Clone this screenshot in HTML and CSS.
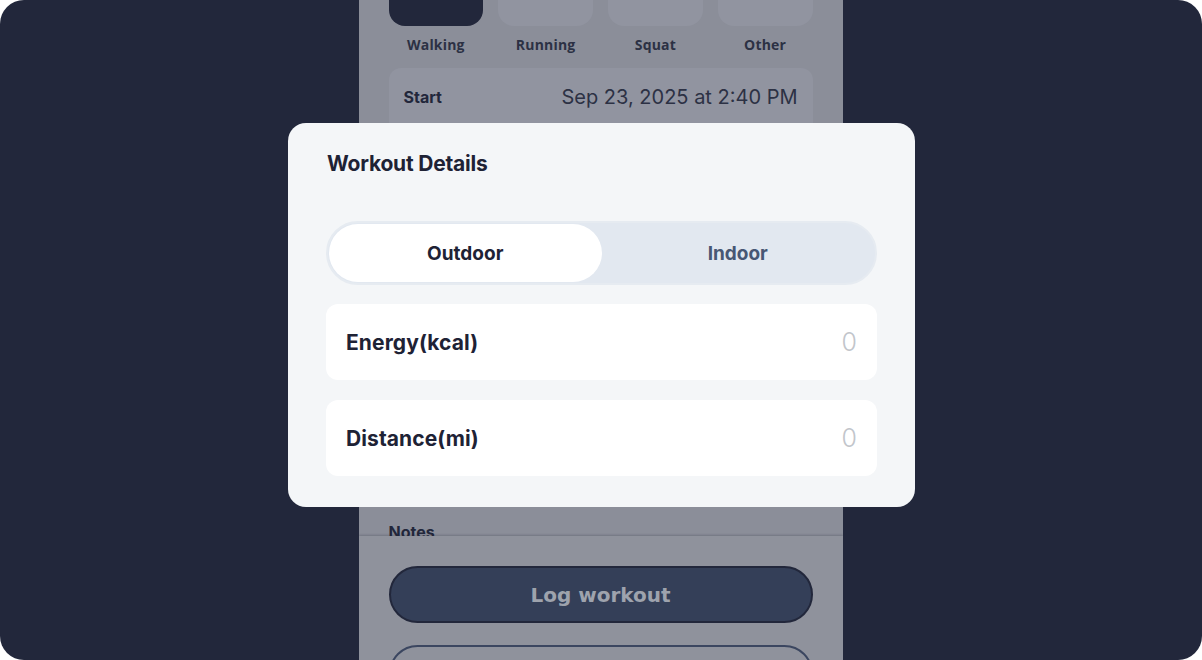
FILE: index.html
```html
<!DOCTYPE html>
<html lang="en">
<head>
    <meta charset="UTF-8">
    <meta name="viewport" content="width=device-width, initial-scale=1.0">
    <title>Log Workout</title>
    <link rel="stylesheet" href="styles.css">
</head>
<body>

<div class="frame">

    <div class="phone">
        <div class="phone-scroll">
            <div class="type-grid">
                <div class="type-item">
                    <div class="type-tile selected"></div>
                    <span>Walking</span>
                </div>
                <div class="type-item">
                    <div class="type-tile"></div>
                    <span>Running</span>
                </div>
                <div class="type-item">
                    <div class="type-tile"></div>
                    <span>Squat</span>
                </div>
                <div class="type-item">
                    <div class="type-tile"></div>
                    <span>Other</span>
                </div>
            </div>

            <div class="time-card">
                <div class="time-row">
                    <strong>Start</strong>
                    <span>Sep 23, 2025 at 2:40 PM</span>
                </div>
            </div>

            <div class="spacer"></div>

            <div class="notes-label">Notes</div>
        </div>

        <div class="phone-footer">
            <button class="btn btn-primary">Log workout</button>
            <button class="btn btn-outline"></button>
        </div>
    </div>

    <div class="modal">
        <h2>Workout Details</h2>

        <div class="segmented">
            <button class="segment active">Outdoor</button>
            <button class="segment">Indoor</button>
        </div>

        <div class="field">
            <label>Energy(kcal)</label>
            <span class="field-value">0</span>
        </div>

        <div class="field">
            <label>Distance(mi)</label>
            <span class="field-value">0</span>
        </div>
    </div>

</div>

</body>
</html>
```

FILE: styles.css
```css
* {
    box-sizing: border-box;
}

body {
    margin: 0;
    padding: 0;
    background-color: #ffffff;
    font-family: Inter, "Liberation Sans", sans-serif;
}

.frame {
    position: relative;
    width: 1202px;
    height: 660px;
    background-color: #22273b;
    border-radius: 24px;
    overflow: hidden;
    display: flex;
    justify-content: center;
}

.phone {
    width: 484px;
    margin-left: -1px;
    height: 660px;
    background-color: #8b8e99;
    display: flex;
    flex-direction: column;
    overflow: hidden;
}

.phone-scroll {
    flex: 1;
    min-height: 0;
    overflow: hidden;
    padding: 0 30px;
}

.type-grid {
    margin-top: -54px;
    display: grid;
    grid-template-columns: repeat(4, 1fr);
    gap: 15px;
}

.type-item {
    display: flex;
    flex-direction: column;
    align-items: center;
}

.type-tile {
    width: 100%;
    height: 80px;
    border-radius: 16px;
    background-color: #9194a0;
}

.type-tile.selected {
    background-color: #22273b;
}

.type-item span {
    margin-top: 9px;
    font-family: "Open Sans", sans-serif;
    font-size: 14px;
    font-weight: 700;
    letter-spacing: 0.2px;
    color: #2c3144;
}

.time-card {
    margin-top: 14px;
    height: 116px;
    background-color: #9194a0;
    border-radius: 12px;
    padding: 0 15px;
}

.time-row {
    display: flex;
    justify-content: space-between;
    align-items: center;
    height: 58px;
}

.time-row strong {
    font-size: 16px;
    font-weight: 700;
    color: #22273b;
}

.time-row span {
    font-size: 20px;
    color: #2c3144;
}

.spacer {
    height: 338px;
}

.notes-label {
    font-size: 16px;
    font-weight: 700;
    color: #22273b;
}

.phone-footer {
    height: 124px;
    background-color: #8f929c;
    box-shadow: 0 -1px 2px rgba(30, 34, 50, 0.25);
    padding: 30px 30px 0;
    display: flex;
    flex-direction: column;
    gap: 22px;
    flex-shrink: 0;
}

.btn {
    height: 57px;
    border-radius: 29px;
    font-family: "DejaVu Sans", sans-serif;
    font-size: 20px;
    font-weight: 700;
    flex-shrink: 0;
}

.btn-primary {
    background-color: #343f58;
    border: 2px solid #22273b;
    color: #9ea3ad;
}

.btn-outline {
    background-color: transparent;
    border: 2px solid #3b4660;
    color: #3b4660;
}

.modal {
    position: absolute;
    left: 288px;
    top: 123px;
    width: 627px;
    height: 384px;
    background-color: #f4f6f8;
    border-radius: 18px;
    padding: 24px 38px 0 38px;
}

.modal h2 {
    margin: 5px 0 0 1px;
    font-size: 21px;
    font-weight: 700;
    color: #1e2235;
    line-height: 24px;
    letter-spacing: -0.2px;
}

.segmented {
    margin-top: 45px;
    height: 64px;
    width: 551px;
    background-color: #e2e8f0;
    border: 2px solid #e6ebf1;
    border-radius: 32px;
    display: flex;
    padding: 1px;
}

.segment {
    flex: 1;
    border: none;
    background: transparent;
    border-radius: 29px;
    font-family: Inter, sans-serif;
    font-size: 19px;
    font-weight: 700;
    color: #475774;
}

.segment.active {
    background-color: #ffffff;
    color: #1e2235;
}

.field {
    margin-top: 19px;
    height: 76px;
    width: 551px;
    background-color: #ffffff;
    border-radius: 12px;
    padding: 0 20px;
    display: flex;
    justify-content: space-between;
    align-items: center;
}

.field + .field {
    margin-top: 20px;
}

.field label {
    font-size: 21px;
    font-weight: 700;
    letter-spacing: 0.1px;
    color: #1e2235;
}

.field-value {
    font-size: 25px;
    font-weight: 300;
    color: #c2c5cb;
}
```
